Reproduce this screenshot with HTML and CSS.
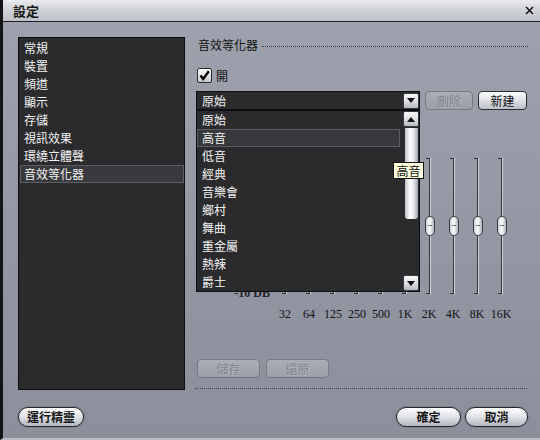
FILE: index.html
```html
<!DOCTYPE html>
<html>
<head>
<meta charset="utf-8">
<link rel="stylesheet" href="styles.css">
</head>
<body>
<div class="window">
  <div class="titlebar">
    <span class="title">設定</span>
    <svg class="close" width="9" height="9" viewBox="0 0 9 9"><path d="M1 1L8 8M8 1L1 8" stroke="#111" stroke-width="1.5"/></svg>
  </div>
  <div class="content">
    <div class="main">
      <ul class="nav">
        <li>常規</li>
        <li>裝置</li>
        <li>頻道</li>
        <li>顯示</li>
        <li>存儲</li>
        <li>視訊效果</li>
        <li>環繞立體聲</li>
        <li class="sel">音效等化器</li>
      </ul>
      <div class="panel">
        <div class="heading"><span>音效等化器</span><i class="dots"></i></div>
        <div class="check">
          <span class="box"><svg width="13" height="13" viewBox="0 0 13 13"><path d="M2.5 6.5L5.2 10L10.8 2.2" fill="none" stroke="#000" stroke-width="2.4"/></svg></span>
          <span>開</span>
        </div>
        <div class="combo-row">
          <div class="combo">
            <span class="combo-text">原始</span>
            <span class="sbtn"><svg width="8" height="5" viewBox="0 0 8 5"><path d="M0 0H8L4 5Z" fill="#111"/></svg></span>
          </div>
          <button class="btn disabled">刪除</button>
          <button class="btn">新建</button>
        </div>
        <div class="eq">
          <div class="sliders">
            <div class="db"><span>+10 DB</span><span>0 DB</span><span>-10 DB</span></div>
            <div class="col"><span class="thumb"></span></div>
            <div class="col"><span class="thumb"></span></div>
            <div class="col"><span class="thumb"></span></div>
            <div class="col"><span class="thumb"></span></div>
            <div class="col"><span class="thumb"></span></div>
            <div class="col"><span class="thumb"></span></div>
            <div class="col"><span class="thumb"></span></div>
            <div class="col"><span class="thumb"></span></div>
            <div class="col"><span class="thumb"></span></div>
            <div class="col"><span class="thumb"></span></div>
          </div>
          <div class="freqs">
            <span>32</span><span>64</span><span>125</span><span>250</span><span>500</span><span>1K</span><span>2K</span><span>4K</span><span>8K</span><span>16K</span>
          </div>
          <div class="popup">
            <ul class="options">
              <li>原始</li>
              <li class="hl">高音</li>
              <li>低音</li>
              <li>經典</li>
              <li>音樂會</li>
              <li>鄉村</li>
              <li>舞曲</li>
              <li>重金屬</li>
              <li>熱辣</li>
              <li>爵士</li>
            </ul>
            <div class="scrollbar">
              <span class="sbtn"><svg width="8" height="5" viewBox="0 0 8 5"><path d="M0 5H8L4 0Z" fill="#111"/></svg></span>
              <span class="sthumb"></span>
              <span class="strack"></span>
              <span class="sbtn"><svg width="8" height="5" viewBox="0 0 8 5"><path d="M0 0H8L4 5Z" fill="#111"/></svg></span>
            </div>
          </div>
          <div class="tip">高音</div>
        </div>
        <div class="save-row">
          <button class="btn disabled wide">儲存</button>
          <button class="btn disabled wide">還原</button>
        </div>
        <div class="sep"></div>
      </div>
    </div>
    <div class="footer">
      <button class="pill wizard">運行精靈</button>
      <div class="footer-right">
        <button class="pill ok">確定</button>
        <button class="pill cancel">取消</button>
      </div>
    </div>
  </div>
</div>
</body>
</html>
```

FILE: styles.css
```css
* { box-sizing: border-box; }
html, body { margin: 0; padding: 0; }
body {
  width: 540px;
  height: 440px;
  background: #8a8e9b;
  font-family: "Noto Sans CJK TC", "Noto Sans", sans-serif;
  font-size: 12px;
  overflow: hidden;
}
.window {
  width: 540px;
  height: 440px;
  display: flex;
  flex-direction: column;
  border-left: 3px solid #141416;
  border-bottom: 2px solid #b9bcc4;
  background: linear-gradient(#9ea2ae, #8b8f9c);
}
.titlebar {
  height: 22px;
  flex: none;
  display: flex;
  align-items: center;
  justify-content: space-between;
  padding: 0 6px 0 10px;
  background: linear-gradient(#e9eaee, #cfd1d7 50%, #bfc2ca);
  border-bottom: 1px solid #1e1e20;
}
.title {
  font-weight: bold;
  font-size: 13px;
  color: #1a1a1a;
  line-height: 14px;
}
.close { display: block; }
.content {
  flex: 1;
  display: flex;
  flex-direction: column;
  padding: 15px 12px 0 15px;
}
.main {
  display: flex;
  gap: 11px;
  height: 353px;
}
.nav {
  list-style: none;
  margin: 0;
  padding: 1px 0 0 0;
  width: 167px;
  height: 353px;
  background: #2b2b2e;
  border: 1px solid #0e0e10;
}
.nav li {
  height: 18px;
  line-height: 18px;
  padding-left: 5px;
  color: #f2f2f2;
}
.nav li.sel {
  margin-left: 1px;
  padding-left: 3px;
  background: #393a3e;
  border: 1px solid #5c5e63;
  line-height: 16px;
}
.panel {
  flex: 1;
  display: flex;
  flex-direction: column;
}
.heading {
  height: 16px;
  display: flex;
  align-items: center;
  padding-left: 2px;
  color: #111;
  line-height: 16px;
}
.dots {
  flex: 1;
  margin-left: 4px;
  margin-top: 2px;
  border-top: 1px dotted #3a3c44;
}
.check {
  margin-top: 15px;
  height: 15px;
  display: flex;
  align-items: center;
  gap: 4px;
  padding-left: 1px;
  color: #111;
  line-height: 15px;
}
.box {
  width: 15px;
  height: 15px;
  border: 1px solid #2a2a2e;
  border-radius: 2px;
  background: linear-gradient(#ffffff, #c5c8cf);
  display: flex;
  align-items: center;
  justify-content: center;
}
.combo-row {
  margin-top: 8px;
  height: 19px;
  display: flex;
  gap: 5px;
}
.combo {
  width: 224px;
  height: 19px;
  background: #2b2b2e;
  border: 1px solid #0e0e10;
  display: flex;
  align-items: center;
  justify-content: space-between;
  padding-left: 5px;
}
.combo-text { color: #f2f2f2; line-height: 17px; }
.sbtn {
  width: 16px;
  height: 16px;
  flex: none;
  border: 1px solid #3a3c44;
  border-radius: 2px;
  background: linear-gradient(#fafafa, #d7dae0 60%, #b6bac3);
  display: flex;
  align-items: center;
  justify-content: center;
}
.btn {
  font-family: inherit;
  font-size: 12px;
  height: 19px;
  width: 49px;
  padding: 0;
  line-height: 15px;
  color: #111;
  border: 1px solid #2c2d33;
  border-radius: 4px;
  background: linear-gradient(#ffffff, #e1e3e8 45%, #bdc0c8);
}
.btn.disabled {
  width: 48px;
  color: #81858f;
  text-shadow: 1px 1px 0 #b3b6be;
  border-color: #767a85;
  background: linear-gradient(#a9adb8, #9b9faa);
}
.btn.wide { width: 63px; }
.eq {
  position: relative;
  height: 211px;
}
.sliders {
  display: flex;
  padding-top: 48px;
}
.db {
  width: 77px;
  height: 141px;
  margin-bottom: -5px;
  display: flex;
  flex-direction: column;
  justify-content: space-between;
  align-items: flex-end;
  padding-right: 3px;
  font-family: "Liberation Serif", serif;
  font-weight: bold;
  font-size: 12px;
  line-height: 12px;
  color: #23242a;
}
.col {
  width: 24px;
  height: 136px;
  display: flex;
  align-items: center;
  background:
    linear-gradient(#2e3038, #2e3038) 9px 0 / 3px 1px no-repeat,
    linear-gradient(#2e3038, #2e3038) 9px 135px / 3px 1px no-repeat,
    linear-gradient(90deg, #2f323b 0 1px, #d2d5db 1px 2px) 12px 0 / 2px 100% no-repeat;
}
.thumb {
  position: relative;
  margin-left: 8px;
  width: 10px;
  height: 20px;
  border: 1px solid #3b3e47;
  border-radius: 5px;
  background: linear-gradient(90deg, #c9ccd3, #ffffff 45%, #d3d6dc 75%, #a9adb6);
}
.thumb::after {
  content: "";
  position: absolute;
  left: 2px;
  right: 2px;
  top: 8px;
  border-top: 1px solid #6d717b;
}
.freqs {
  display: flex;
  margin-top: 13px;
  padding-left: 77px;
  font-family: "Liberation Serif", serif;
  font-size: 12px;
  line-height: 14px;
  color: #111;
}
.freqs span { width: 24px; text-align: center; }
.popup {
  position: absolute;
  left: 0;
  top: 0;
  width: 224px;
  height: 182px;
  background: #2b2b2e;
  border: 1px solid #0e0e10;
  display: flex;
}
.options {
  list-style: none;
  margin: 0;
  padding: 0 3px 0 0;
  flex: 1;
}
.options li {
  height: 18px;
  line-height: 18px;
  padding-left: 5px;
  color: #f2f2f2;
}
.options li.hl {
  background: #37383c;
  border: 1px solid #5a5c61;
  padding-left: 4px;
  line-height: 16px;
}
.scrollbar {
  width: 16px;
  display: flex;
  flex-direction: column;
}
.sthumb {
  height: 91px;
  margin: 1px 1px 0 2px;
  border-radius: 0 0 3px 3px;
  background: linear-gradient(90deg, #bfc2c9, #ffffff 40%, #e1e3e8 70%, #9da1ab);
}
.strack { flex: 1; }
.tip {
  position: absolute;
  left: 197px;
  top: 52px;
  width: 31px;
  height: 17px;
  background: #ffffe1;
  border: 1px solid #111;
  color: #111;
  line-height: 15px;
  text-align: center;
}
.save-row {
  margin-top: 38px;
  display: flex;
  gap: 6px;
  padding-left: 1px;
}
.sep {
  margin-top: 10px;
  margin-left: -1px;
  margin-right: 1px;
  border-top: 1px dotted #3a3c44;
}
.footer {
  margin-top: 17px;
  display: flex;
  justify-content: space-between;
}
.footer-right { display: flex; gap: 4px; }
.pill {
  font-family: inherit;
  font-size: 12px;
  font-weight: bold;
  height: 20px;
  padding: 0;
  line-height: 16px;
  color: #161616;
  border: 1px solid #26272c;
  border-radius: 10px;
  background: linear-gradient(#ffffff, #e3e5ea 45%, #b3b7c0);
  box-shadow: 0 0 0 1px #7d818c;
}
.wizard { width: 66px; }
.ok { width: 65px; }
.cancel { width: 63px; }
```
